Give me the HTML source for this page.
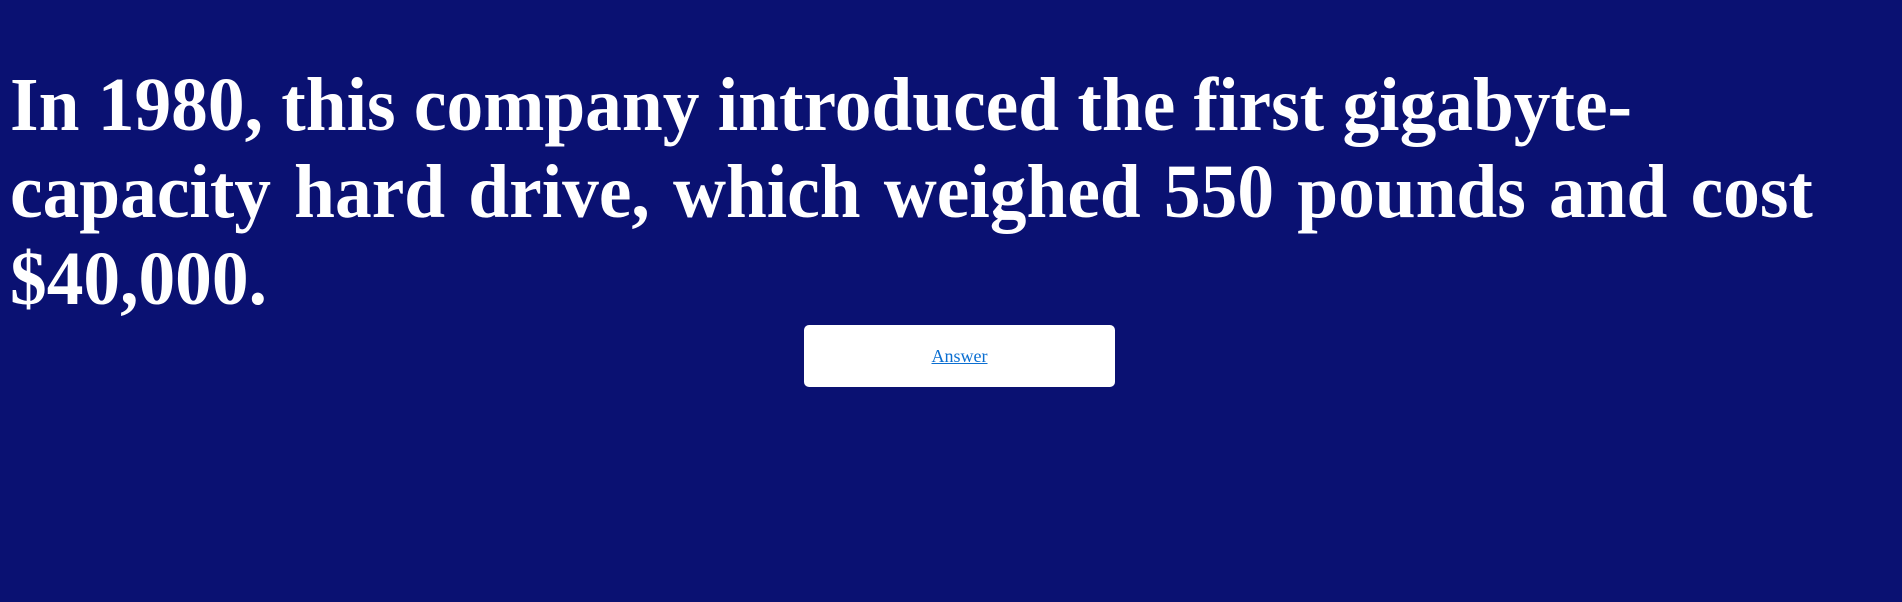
<!DOCTYPE html>
<html><head><style>
html,body{margin:0;padding:0;background:#0a1172;width:1902px;height:602px;overflow:hidden;}
h1{position:absolute;left:10px;top:62px;margin:0;width:1950px;font-family:"Liberation Serif",serif;font-weight:bold;font-size:76px;line-height:87px;color:#fff;transform:scaleX(0.966);transform-origin:0 0;}
.btn{position:absolute;left:804px;top:325px;width:311px;height:62px;background:#fff;border-radius:5px;display:flex;align-items:center;justify-content:center;}
.btn a{font-family:"Liberation Serif",serif;font-size:18px;color:#0a6ed1;text-decoration:underline;}
</style></head><body>
<h1>In 1980, this company introduced the first gigabyte-<br><span style="word-spacing:5px">capacity hard drive, which weighed 550 pounds and cost</span><br>$40,000.</h1>
<div class="btn"><a>Answer</a></div>
</body></html>
